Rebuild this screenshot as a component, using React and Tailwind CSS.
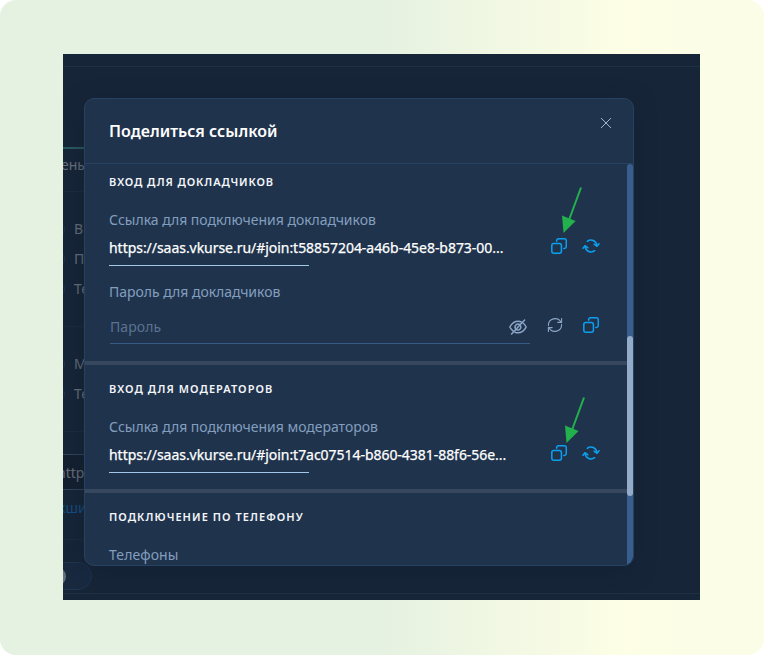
import React from "react";

function CopyIcon() {
  return (
    <svg className="size-4 shrink-0" viewBox="0 0 16 16" fill="none" stroke="#0ba0f0" strokeWidth="1.5" strokeLinecap="round">
      <rect x="0.8" y="5.6" width="9.6" height="9.6" rx="2" />
      <path d="M5.7 3.2V2.8a2 2 0 0 1 2-2h5.600a2 2 0 0 1 2 2v5.600a2 2 0 0 1-2 2h-.5" />
    </svg>
  );
}

function SyncIcon() {
  return (
    <svg className="h-4 w-[18px] shrink-0" viewBox="0 0 18 16" fill="none" stroke="#0ba0f0" strokeWidth="1.5" strokeLinecap="round" strokeLinejoin="round">
      <path d="M5.300 3.300A6 6 0 0 1 14.900 7.400" />
      <path d="M12.100 6.200l2.900 2.100 2-2.600" />
      <path d="M12.700 12.700A6 6 0 0 1 3.100 8.600" />
      <path d="M5.900 9.800L3 7.700 1 10.300" />
    </svg>
  );
}

function RefreshIcon() {
  return (
    <svg className="size-4 shrink-0" viewBox="0 0 16 16" fill="none" stroke="#8ba6c6" strokeWidth="1.1" strokeLinecap="round" strokeLinejoin="round">
      <path d="M1.4 8.6A6.7 6.7 0 0 1 14 5.2" />
      <path d="M14.6 1.6v3.8h-3.8" />
      <path d="M14.6 7.4A6.7 6.7 0 0 1 2 10.8" />
      <path d="M1.4 14.4v-3.8h3.8" />
    </svg>
  );
}

function EyeOffIcon() {
  return (
    <svg className="h-4 w-[18px] shrink-0" viewBox="0 0 18 16" fill="none" stroke="#8ba6c6" strokeWidth="1.5" strokeLinecap="round" strokeLinejoin="round">
      <path d="M12.600 3.200C11.500 2.500 10.300 2.200 9 2.200 5.900 2.200 3.300 4 1.300 7.100a1.500 1.500 0 0 0 0 1.800c.8 1.200 1.700 2.200 2.700 3" />
      <path d="M6 13.200c1 .400 2 .600 3 .600 3.100 0 5.700-1.800 7.700-4.900a1.500 1.500 0 0 0 0-1.800c-.7-1.100-1.500-2-2.400-2.800" />
      <path d="M11 5.900A2.900 2.900 0 0 0 6.900 10M7.600 10.600A2.900 2.900 0 0 0 11.700 7" />
      <path d="M2.600 15L15.600 1" />
    </svg>
  );
}

function CloseIcon() {
  return (
    <svg className="size-3" viewBox="0 0 12 12" stroke="#9fb6d3" strokeWidth="1">
      <path d="M1 1L11 11M11 1L1 11" />
    </svg>
  );
}

function Pointer({ className }) {
  return (
    <svg className={`absolute h-[48px] w-[22px] ${className}`} viewBox="0 0 22 48">
      <path d="M20 1.500L8 34" stroke="#22b14c" strokeWidth="2" />
      <path d="M1 29.500L14.600 35 2.500 47z" fill="#22b14c" />
    </svg>
  );
}

function Heading({ children, className = "tracking-[1.05px]" }) {
  return <h3 className={`h-5 text-[11px] leading-5 font-semibold whitespace-nowrap text-[#f3f6fa] ${className}`}>{children}</h3>;
}

function Label({ children, className = "" }) {
  return <div className={`h-5 text-sm leading-5 tracking-[-0.02px] whitespace-nowrap text-[#829fbf] ${className}`}>{children}</div>;
}

function LinkField({ label, url }) {
  return (
    <>
      <Label className="mt-[18px]">{label}</Label>
      <div className="mt-2 flex h-5 items-start justify-between">
        <span className="text-sm leading-5 tracking-[-0.04px] whitespace-nowrap text-white [-webkit-text-stroke:0.25px_white]">{url}</span>
        <span className="mr-[27px] flex gap-[15px]">
          <CopyIcon />
          <SyncIcon />
        </span>
      </div>
      <div className="mt-[7px] h-px w-[200px] bg-[#a4c6e8]" />
    </>
  );
}

function Option({ children }) {
  return (
    <div className="flex h-[30px] items-center">
      <span className="-ml-4 size-[18px] shrink-0 rounded-full border border-[#1f344b]" />
      <span className="ml-[9px]">{children}</span>
    </div>
  );
}

function Backdrop() {
  return (
    <div className="flex h-full flex-col overflow-hidden text-sm leading-5 whitespace-nowrap text-[#68707a]">
      <div className="h-[13px] shrink-0 border-b border-[#1f3041]" />
      <div className="h-[82px] w-[60px] shrink-0 border-b-2 border-[#275a60]" />
      <div className="h-[43px] w-[60px] shrink-0 border-b border-[#1b2c3f] pt-[6px]">
        <span className="-ml-[2px] block">ень</span>
      </div>
      <div className="h-[135px] w-[60px] shrink-0 border-b border-[#1b2c3f] pt-[22px]">
        <Option>В</Option>
        <Option>П</Option>
        <Option>Те</Option>
      </div>
      <div className="h-[105px] w-[60px] shrink-0 border-b border-[#1b2c3f] pt-[22px]">
        <Option>М</Option>
        <Option>Те</Option>
      </div>
      <div className="h-[108px] w-[60px] shrink-0 border-b border-[#1b2c3f] pt-[22px]">
        <div className="h-9 border-y border-[#35455a] bg-[#142030] pt-2">
          <span className="-ml-[6px] block">http</span>
        </div>
        <div className="-ml-[5px] mt-2 text-[#144f80]">кши</div>
      </div>
      <div className="h-[54px] shrink-0 border-b border-[#1f3041] pt-[22px]">
        <div className="-ml-5 flex h-7 w-[49px] items-center rounded-full border border-[#1e3650] bg-[#182940] pl-[3px]">
          <span className="size-[19px] rounded-full bg-[#64707b]" />
        </div>
      </div>
    </div>
  );
}

export default function App() {
  return (
    <div className="h-[655px] w-[764px] bg-white font-['Noto_Sans','Open_Sans',sans-serif]">
      <div className="h-full rounded-[16px] bg-[linear-gradient(90deg,#e5f1e1_0%,#e5f1e1_49%,#fdfee5_82%,#fcfde6_90%)] pt-[54px] pl-[63px]">
        <div className="relative h-[546px] w-[637px] overflow-hidden bg-[#172538]">
          <Backdrop />
          <div className="absolute top-11 left-[21px] flex h-[468px] w-[550px] flex-col overflow-hidden rounded-[10px] border border-[#274160] bg-[#20334c] shadow-[0_4px_20px_rgba(16,30,48,0.5)]">
            <header className="flex h-[65px] shrink-0 justify-between border-b border-[#274160] pr-[21px] pl-6">
              <h2 className="pt-5 text-base leading-6 font-semibold tracking-[0.03px] text-white">Поделиться ссылкой</h2>
              <div className="pt-[18px]">
                <CloseIcon />
              </div>
            </header>
            <div className="flex min-h-0 flex-1">
              <main className="min-w-0 flex-1 overflow-hidden">
                <section className="h-[201px] border-b-4 border-[#37485e] pt-2 pl-6">
                  <Heading className="tracking-[0.9px]">ВХОД ДЛЯ ДОКЛАДЧИКОВ</Heading>
                  <LinkField label="Ссылка для подключения докладчиков" url="https://saas.vkurse.ru/#join:t58857204-a46b-45e8-b873-00..." />
                  <Label className="mt-4">Пароль для докладчиков</Label>
                  <div className="mt-[14px] flex">
                    <div className="ml-px flex h-[28px] w-[420px] justify-between border-b border-[#365b88] pr-[3px]">
                      <span className="pt-px text-sm leading-5 tracking-[0.1px] text-[#5b7290]">Пароль</span>
                      <span className="pt-[3px]">
                        <EyeOffIcon />
                      </span>
                    </div>
                    <span className="ml-[17px] flex gap-5 pt-px">
                      <RefreshIcon />
                      <CopyIcon />
                    </span>
                  </div>
                </section>
                <section className="h-[128px] border-b-4 border-[#37485e] pt-[14px] pl-6">
                  <Heading>ВХОД ДЛЯ МОДЕРАТОРОВ</Heading>
                  <LinkField label="Ссылка для подключения модераторов" url="https://saas.vkurse.ru/#join:t7ac07514-b860-4381-88f6-56e..." />
                </section>
                <section className="pt-[14px] pl-6">
                  <Heading>ПОДКЛЮЧЕНИЕ ПО ТЕЛЕФОНУ</Heading>
                  <Label className="mt-[18px] tracking-[0.1px]">Телефоны</Label>
                </section>
              </main>
              <div className="w-[6px] shrink-0 rounded-t-[3px] bg-[#385e8d] pt-[172px]">
                <div className="h-[160px] rounded-[3px] bg-[#92acc9]" />
              </div>
            </div>
          </div>
          <Pointer className="top-[132px] left-[498px]" />
          <Pointer className="top-[342px] left-[501px]" />
        </div>
      </div>
    </div>
  );
}
